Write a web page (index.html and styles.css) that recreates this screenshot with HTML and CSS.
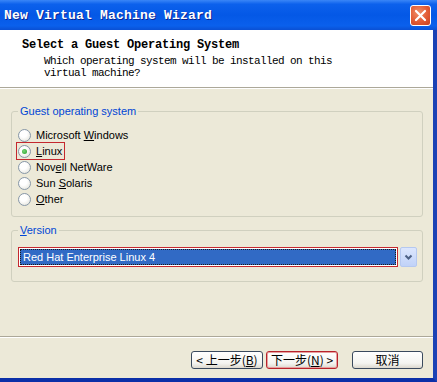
FILE: index.html
```html
<!DOCTYPE html>
<html>
<head>
<meta charset="utf-8">
<link rel="stylesheet" href="styles.css">
</head>
<body>
<div class="window">
  <div class="titlebar">
    <span class="title">New Virtual Machine Wizard</span>
    <span class="close">
      <svg width="19" height="19" viewBox="0 0 19 19"><path d="M5 5 L14 14 M14 5 L5 14" stroke="#fff" stroke-width="2.2" stroke-linecap="round"/></svg>
    </span>
  </div>
  <div class="frame">
    <div class="header">
      <div class="h-title">Select a Guest Operating System</div>
      <div class="h-sub">Which operating system will be installed on this<br>virtual machine?</div>
    </div>
    <div class="content">
      <fieldset class="group group-os">
        <legend>Guest operating system</legend>
        <div class="radio"><span class="rwrap"><span class="dot"></span><span>Microsoft <u>W</u>indows</span></span></div>
        <div class="radio"><span class="rwrap sel"><span class="dot checked"></span><span><u>L</u>inux</span></span></div>
        <div class="radio"><span class="rwrap"><span class="dot"></span><span>Nov<u>e</u>ll NetWare</span></span></div>
        <div class="radio"><span class="rwrap"><span class="dot"></span><span>Sun <u>S</u>olaris</span></span></div>
        <div class="radio"><span class="rwrap"><span class="dot"></span><span><u>O</u>ther</span></span></div>
      </fieldset>
      <fieldset class="group group-ver">
        <legend><u>V</u>ersion</legend>
        <div class="combo">
          <div class="combo-field"><div class="combo-text">Red Hat Enterprise Linux 4</div></div>
          <div class="combo-btn">
            <svg width="9" height="7" viewBox="0 0 9 7"><path d="M1.5 1.5 L4.5 4.5 L7.5 1.5" fill="none" stroke="#4D6185" stroke-width="2"/></svg>
          </div>
        </div>
      </fieldset>
    </div>
    <div class="footer">
      <button class="btn">&lt; 上一步(<u>B</u>)</button>
      <button class="btn btn-def">下一步(<u>N</u>) &gt;</button>
      <button class="btn btn-cancel">取消</button>
    </div>
  </div>
</div>
</body>
</html>
```

FILE: styles.css
```css
* { box-sizing: border-box; }
html, body { margin: 0; padding: 0; }
body {
  width: 437px;
  height: 382px;
  overflow: hidden;
  background: #1B42B5;
  font-family: "Liberation Sans", Arial, sans-serif;
}
.window {
  display: flex;
  flex-direction: column;
  width: 437px;
  height: 382px;
}
.titlebar {
  height: 30px;
  flex: none;
  display: flex;
  align-items: center;
  justify-content: space-between;
  padding: 0 6px 0 4px;
  background: linear-gradient(#3A86F7 0%, #0C61EC 14%, #0458E6 50%, #0A60EC 86%, #0A50D4 100%);
}
.title {
  font: bold 13px "Liberation Mono", monospace;
  color: #fff;
  letter-spacing: 0.2px;
  text-shadow: 1px 1px 0 #0A2590;
  padding-top: 1px;
}
.close {
  width: 21px;
  height: 21px;
  border: 1px solid #fff;
  border-radius: 3px;
  background: radial-gradient(circle at 40% 35%, #F0906A 0%, #E25A33 55%, #C7401F 100%);
  display: flex;
  align-items: center;
  justify-content: center;
}
.frame {
  flex: 1;
  display: flex;
  flex-direction: column;
  background: #ECE9D8;
  border-right: 4px solid #1B42B5;
  border-bottom: 4px solid #0B2FA8;
}
.header {
  height: 58px;
  flex: none;
  background: #fff;
  border-bottom: 1px solid #ACA899;
  padding: 9px 0 0 22px;
  font-family: "Liberation Mono", monospace;
  color: #000;
}
.h-title {
  font-weight: bold;
  font-size: 12px;
  line-height: 12px;
  letter-spacing: -0.2px;
}
.h-sub {
  margin-top: 4px;
  padding-left: 22px;
  font-size: 11px;
  line-height: 12px;
  letter-spacing: -0.6px;
}
.content {
  flex: 1;
  display: flex;
  flex-direction: column;
  padding: 17px 10px 0 11px;
  box-shadow: inset 0 1px 0 #fff;
}
.group {
  margin: 0;
  border: 1px solid #D0D0BF;
  border-radius: 3px;
  min-width: 0;
}
.group legend {
  padding: 0 2px;
  font-size: 11px;
  line-height: 13px;
  color: #0046D5;
}
.group-os {
  padding: 9px 6px 9px 6px;
}
.group-ver {
  margin-top: 7px;
  padding: 10px 5px 14px 6px;
}
.radio {
  height: 16px;
  display: flex;
  align-items: center;
  font-size: 11px;
  color: #000;
}
.rwrap {
  display: inline-flex;
  align-items: center;
  height: 14px;
  padding-right: 1px;
}
.rwrap.sel {
  outline: 1px solid #C4282E;
  outline-offset: 1px;
}
.dot {
  width: 13px;
  height: 13px;
  border-radius: 50%;
  border: 1px solid #8797A8;
  background: radial-gradient(circle at 40% 35%, #fff 35%, #DEDDD3 100%);
  margin-right: 5px;
  display: flex;
  align-items: center;
  justify-content: center;
}
.dot.checked::after {
  content: "";
  width: 5px;
  height: 5px;
  border-radius: 50%;
  background: radial-gradient(circle at 40% 40%, #7BD47B, #21A121);
}
.combo {
  display: flex;
  height: 20px;
}
.combo-field {
  flex: 1;
  border: 1px solid #C4282E;
  padding: 1px;
  background: #fff;
}
.combo-text {
  height: 100%;
  background: #316AC5;
  color: #fff;
  border: 1px dotted #1A1A1A;
  font-size: 11px;
  line-height: 14px;
  padding-left: 2px;
}
.combo-btn {
  width: 17px;
  margin-left: 2px;
  border: 1px solid #B5C8F0;
  border-radius: 2px;
  background: linear-gradient(#DCE6FD, #C0D2F8);
  display: flex;
  align-items: center;
  justify-content: center;
}
.footer {
  height: 42px;
  flex: none;
  border-top: 1px solid #ACA899;
  box-shadow: inset 0 1px 0 #fff;
  padding: 14px 10px 0 0;
  display: flex;
  justify-content: flex-end;
  align-items: flex-start;
}
.btn {
  width: 72px;
  height: 18px;
  padding: 0;
  border: 1px solid #3A4A5E;
  border-radius: 3px;
  background: linear-gradient(#FFFFFF 0%, #F4F4F0 70%, #DCD8CE 100%);
  font-family: "Noto Sans CJK SC", sans-serif;
  font-size: 12px;
  line-height: 14px;
  color: #000;
}
.btn-def {
  margin-left: 3px;
  border-color: #B8232B;
  box-shadow: inset 0 0 0 1px #E7A0A0;
}
.btn-cancel {
  margin-left: 14px;
  width: 71px;
}
```
